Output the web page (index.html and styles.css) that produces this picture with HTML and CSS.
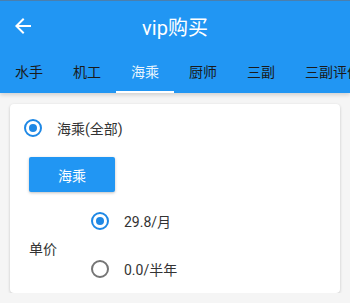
FILE: index.html
```html
<!DOCTYPE html>
<html lang="zh">
<head>
  <meta charset="UTF-8">
  <title>vip购买</title>
  <link rel="stylesheet" href="styles.css">
</head>
<body>

<header class="appbar">
  <div class="toolbar">
    <span class="back">
      <svg viewBox="0 0 24 24" width="24" height="24"><path fill="#fff" d="M20 11H7.83l5.59-5.59L12 4l-8 8 8 8 1.41-1.41L7.83 13H20v-2z"/></svg>
    </span>
    <span class="title">vip购买</span>
    <span></span>
  </div>
  <nav class="tabs">
    <span class="tab">水手</span>
    <span class="tab">机工</span>
    <span class="tab active">海乘</span>
    <span class="tab">厨师</span>
    <span class="tab">三副</span>
    <span class="tab">三副评价</span>
  </nav>
</header>

<div class="card">
  <div class="option-row">
    <span class="radio checked"></span>
    <span class="label">海乘(全部)</span>
  </div>

  <button class="buy-btn">海乘</button>

  <div class="price">
    <span class="price-label">单价</span>
    <div class="price-options">
      <div class="price-row">
        <span class="radio checked"></span>
        <span class="label">29.8/月</span>
      </div>
      <div class="price-row">
        <span class="radio"></span>
        <span class="label">0.0/半年</span>
      </div>
    </div>
  </div>
</div>

</body>
</html>
```

FILE: styles.css
```css
body {
  margin: 0;
  background: #f5f5f5;
  font-family: Roboto, "Noto Sans CJK SC", sans-serif;
  color: #333;
  overflow: hidden;
}
.appbar {
  background: #2196f3;
  border-top: 1px solid #4a7fae;
  box-shadow: 0 2px 4px rgba(0, 0, 0, 0.15);
}
.toolbar {
  height: 50px;
  display: grid;
  grid-template-columns: 48px 1fr 48px;
  align-items: center;
}
.back {
  padding-left: 11px;
  display: flex;
}
.title {
  text-align: center;
  color: #fff;
  font-size: 20px;
}
.tabs {
  display: flex;
  height: 42px;
  white-space: nowrap;
  overflow: hidden;
}
.tab {
  flex: none;
  width: 58px;
  box-sizing: border-box;
  border-bottom: 2px solid transparent;
  display: flex;
  align-items: center;
  justify-content: center;
  font-size: 14px;
  color: #1a1a1a;
}
.tab:last-child {
  justify-content: flex-start;
  padding-left: 15px;
}
.tab.active {
  color: rgba(255, 255, 255, 0.92);
  border-bottom-color: #fff;
}
.card {
  margin: 11px 10px 0;
  background: #fff;
  border-radius: 4px;
  box-shadow: 0 1px 3px rgba(0, 0, 0, 0.2);
  padding: 0 14px;
}
.option-row {
  height: 48px;
  display: flex;
  align-items: center;
}
.radio {
  width: 18px;
  height: 18px;
  box-sizing: border-box;
  border: 2px solid #757575;
  border-radius: 50%;
  display: flex;
  align-items: center;
  justify-content: center;
  flex: none;
}
.radio.checked {
  border-color: #1e88e5;
}
.radio.checked::after {
  content: "";
  width: 8px;
  height: 8px;
  border-radius: 50%;
  background: #1e88e5;
}
.label {
  margin-left: 15px;
  font-size: 14px;
}
.buy-btn {
  margin: 5px 0 0 5px;
  width: 86px;
  height: 35px;
  border: none;
  border-radius: 2px;
  background: #2196f3;
  color: #fff;
  font-family: inherit;
  font-size: 14px;
  box-shadow: 0 1px 3px rgba(0, 0, 0, 0.25);
  display: block;
}
.price {
  margin-top: 5px;
  display: flex;
  align-items: center;
}
.price-label {
  width: 62px;
  padding-left: 5px;
  padding-top: 5px;
  font-size: 14px;
}
.price-row {
  height: 48px;
  display: flex;
  align-items: center;
}
```
